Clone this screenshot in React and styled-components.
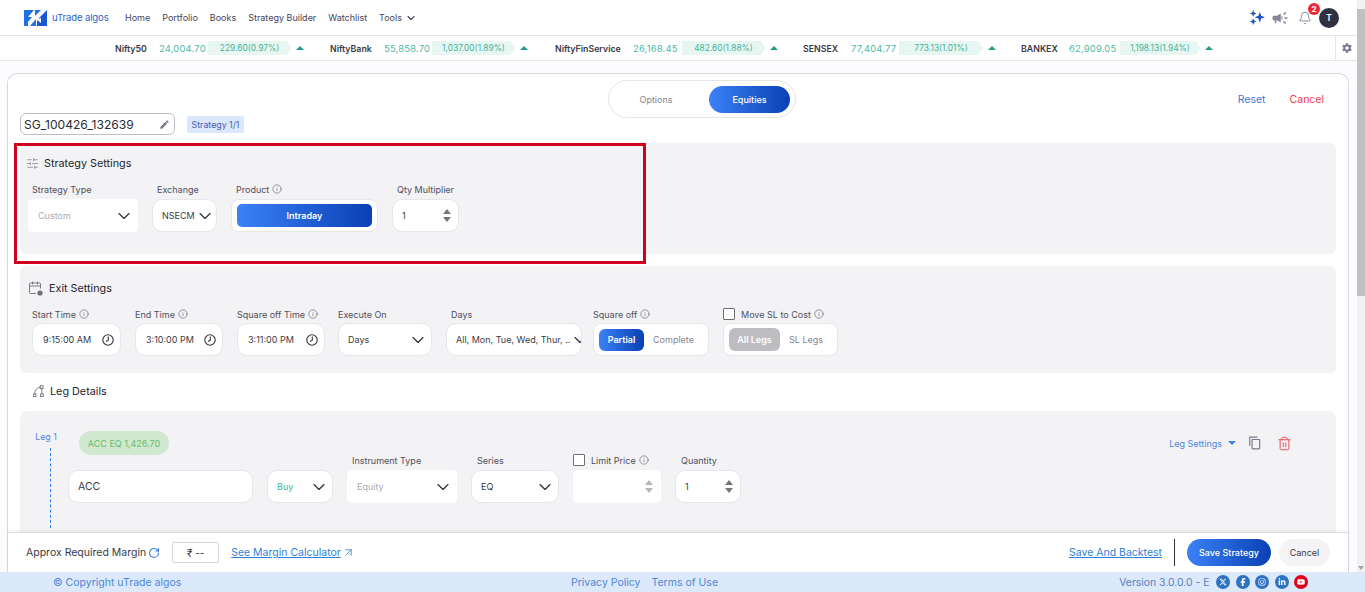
import React from 'react'
import styled, { createGlobalStyle } from 'styled-components'
import {
  Bell,
  ChevronDown,
  Info,
  RotateCw,
  SlidersHorizontal,
  Trash2,
  ArrowUpRight,
} from 'lucide-react'
import { MdCampaign, MdContentCopy, MdEdit, MdSettings } from 'react-icons/md'
import {
  FaFacebookF,
  FaInstagram,
  FaLinkedinIn,
  FaXTwitter,
  FaYoutube,
} from 'react-icons/fa6'

const BLUE_GRADIENT = 'linear-gradient(90deg, #3b82f6, #0a40b5)'

const GlobalStyle = createGlobalStyle`
  html, body {
    margin: 0;
    padding: 0;
    height: 100%;
    overflow: hidden;
    background: #ffffff;
  }
  * {
    box-sizing: border-box;
  }
  body {
    font-family: Inter, "Liberation Sans", sans-serif;
  }
`

const Screen = styled.div`
  width: 1365px;
  height: 592px;
  display: flex;
  flex-direction: column;
  overflow: hidden;
`
const Viewport = styled.div`
  flex: 1;
  min-height: 0;
  display: flex;
`
const PageColumn = styled.div`
  flex: 1;
  min-width: 0;
  display: flex;
  flex-direction: column;
  background: #fcfbfe;
`
const Scrollbar = styled.div`
  width: 8px;
  background: #f1f1f1;
  display: flex;
  flex-direction: column;
  justify-content: space-between;
  align-items: center;
  padding: 2px 0;
`
const ScrollThumb = styled.div`
  width: 8px;
  height: 287px;
  margin-top: 7px;
  background: #c1c1c1;
`
const ScrollArrow = styled.div`
  width: 0;
  height: 0;
  border-left: 3px solid transparent;
  border-right: 3px solid transparent;
  border-top: 4px solid #a3a3a3;
`

/* header */
const Header = styled.header`
  height: 36px;
  flex: none;
  display: flex;
  align-items: center;
  padding: 0 18px 0 24px;
  background: #ffffff;
  border-bottom: 1px solid #e6e6e8;
`
const LogoText = styled.span`
  margin-left: 5px;
  font-size: 9.6px;
  color: #2f63c9;
  letter-spacing: -0.15px;
  width: 55px;
  white-space: nowrap;
`
const Nav = styled.nav`
  display: flex;
  align-items: center;
  gap: 12px;
  margin-left: 18px;
`
const NavLink = styled.a`
  display: flex;
  align-items: center;
  gap: 3px;
  font-size: 9px;
  color: #45455a;
`
const HeaderIcons = styled.div`
  margin-left: auto;
  display: flex;
  align-items: center;
`
const BellBox = styled.div`
  position: relative;
  display: flex;
  margin-left: 9px;
  margin-right: 7px;
  color: #77778f;
`
const Badge = styled.span`
  position: absolute;
  top: -8px;
  right: -8px;
  width: 12px;
  height: 12px;
  border-radius: 50%;
  background: #ee2737;
  color: #ffffff;
  font-size: 8px;
  font-weight: 700;
  display: flex;
  align-items: center;
  justify-content: center;
`
const Avatar = styled.div`
  width: 20px;
  height: 20px;
  border-radius: 50%;
  background: #2f3140;
  color: #ffffff;
  font-size: 9px;
  font-weight: 600;
  display: flex;
  align-items: center;
  justify-content: center;
`

/* ticker */
const Ticker = styled.div`
  height: 25px;
  flex: none;
  display: flex;
  align-items: center;
  padding-left: 115px;
  background: #ffffff;
  border-bottom: 1px solid #e6e6e8;
`
const TickerItem = styled.div`
  display: flex;
  align-items: center;
  margin-right: ${(p) => p.$gap}px;
`
const TickerName = styled.span`
  width: ${(p) => p.$width}px;
  font-size: 8.8px;
  font-weight: 600;
  color: #3a3a44;
  white-space: nowrap;
`
const TickerValue = styled.span`
  font-size: 9.4px;
  letter-spacing: 0.2px;
  color: #4cb9a3;
  white-space: nowrap;
  width: ${(p) => p.$width}px;
`
const TickerPill = styled.span`
  width: ${(p) => p.$width}px;
  height: 14px;
  background: #e8f6f2;
  color: #3fb49c;
  font-size: 8.4px;
  display: flex;
  align-items: center;
  justify-content: center;
  clip-path: polygon(0 0, 95% 0, 100% 50%, 95% 100%, 0 100%);
  white-space: nowrap;
`
const TickerUp = styled.span`
  width: 0;
  height: 0;
  margin-left: 5px;
  border-left: 4px solid transparent;
  border-right: 4px solid transparent;
  border-bottom: 4px solid #1f9e8a;
`
const TickerGear = styled.div`
  margin-left: auto;
  width: 22px;
  height: 100%;
  border-left: 1px solid #e6e6e8;
  display: flex;
  align-items: center;
  justify-content: center;
  color: #77778a;
`

/* card */
const Main = styled.main`
  flex: 1;
  min-height: 0;
  display: flex;
  padding: 12px 8px 0 7px;
`
const Card = styled.section`
  flex: 1;
  min-width: 0;
  display: flex;
  flex-direction: column;
  background: #ffffff;
  border: 1px solid #d9d7dd;
  border-bottom: 0;
  border-radius: 10px 10px 0 0;
`
const CardBody = styled.div`
  flex: 1;
  min-height: 0;
  overflow: hidden;
  padding: 0 12px;
  display: flex;
  flex-direction: column;
`
const CardHead = styled.div`
  height: 69px;
  flex: none;
  display: grid;
  grid-template-columns: 588px 188px 1fr;
`
const NameCell = styled.div`
  display: flex;
  align-items: flex-end;
  padding-bottom: 8px;
`
const NameBox = styled.div`
  width: 155px;
  height: 22px;
  border: 1px solid #bdbdc3;
  border-radius: 6px;
  display: flex;
  align-items: center;
  justify-content: space-between;
  padding: 0 4px 0 3px;
  font-size: 12.1px;
  color: #2c2c34;
`
const StrategyTag = styled.span`
  margin-left: 12px;
  margin-bottom: 2px;
  width: 57px;
  height: 17px;
  background: #dbe7fb;
  color: #3c63b8;
  font-size: 8.8px;
  display: flex;
  align-items: center;
  justify-content: center;
  border-radius: 2px;
  white-space: nowrap;
`
const ModeToggle = styled.div`
  margin-top: 6px;
  height: 38px;
  border: 1px solid #e6e6ea;
  border-radius: 19px;
  display: flex;
  align-items: center;
  padding-left: 1px;
`
const ModeOption = styled.div`
  width: ${(p) => (p.$active ? '81px' : '99px')};
  height: 27px;
  padding-right: ${(p) => (p.$active ? 0 : 7)}px;
  border-radius: 14px;
  background: ${(p) => (p.$active ? BLUE_GRADIENT : 'transparent')};
  color: ${(p) => (p.$active ? '#ffffff' : '#85858f')};
  font-size: 9px;
  font-weight: ${(p) => (p.$active ? 500 : 400)};
  display: flex;
  align-items: center;
  justify-content: center;
`
const HeadActions = styled.div`
  display: flex;
  justify-content: flex-end;
  gap: 24px;
  padding: 19px 12px 0 0;
  font-size: 10.5px;
`
const TextAction = styled.a`
  color: ${(p) => p.$color};
`

/* panels */
const Panel = styled.div`
  position: relative;
  flex: none;
  height: ${(p) => p.$height}px;
  margin-bottom: 12px;
  background: #f3f2f5;
  border-radius: 6px;
  padding: ${(p) => p.$top}px 12px 0;
`
const RedOutline = styled.div`
  position: absolute;
  left: -6px;
  top: 0;
  width: 632px;
  height: 121px;
  border: 3px solid #d0001f;
`
const PanelTitle = styled.h3`
  margin: 0;
  height: 20px;
  display: flex;
  align-items: center;
  gap: ${(p) => p.$gap}px;
  font-size: 10.8px;
  font-weight: 400;
  color: #25252e;
  svg {
    flex: none;
    color: #6f6f7c;
  }
`
const TitleIconShift = styled.span`
  display: flex;
  margin-left: ${(p) => p.$by}px;
`
const FieldRow = styled.div`
  display: flex;
  margin-top: 8px;
  margin-left: ${(p) => p.$shift || 0}px;
`
const Field = styled.div`
  width: ${(p) => p.$width}px;
  margin-right: ${(p) => p.$gap ?? 14}px;
  flex: none;
`
const Label = styled.div`
  height: 16px;
  display: flex;
  align-items: center;
  gap: 3px;
  padding-left: ${(p) => p.$inset || 0}px;
  font-size: 9px;
  color: #50505c;
  white-space: nowrap;
  margin-bottom: ${(p) => p.$below ?? 2}px;
  svg {
    color: #55555f;
  }
`
const Control = styled.div`
  height: ${(p) => p.$height || 33}px;
  background: #ffffff;
  border: 1px solid ${(p) => (p.$plain ? '#ffffff' : '#e7e6ea')};
  border-radius: ${(p) => (p.$plain ? 4 : 10)}px;
  display: flex;
  align-items: center;
  justify-content: space-between;
  padding: 0 6px 0 ${(p) => p.$left || 9}px;
  font-size: 9px;
  color: ${(p) => p.$color || '#3a3a44'};
  white-space: nowrap;
  overflow: hidden;
`
const ControlText = styled.span`
  font-size: ${(p) => p.$size}px;
`
const Chevron = styled(ChevronDown)`
  flex: none;
  margin-right: -3px;
  color: #2f2f38;
  stroke-width: 1.4;
`
const Spinner = styled.div`
  display: flex;
  flex-direction: column;
  gap: 3px;
  margin-right: 1px;
`
const SpinUp = styled.span`
  width: 0;
  height: 0;
  border-left: 4.5px solid transparent;
  border-right: 4.5px solid transparent;
  border-bottom: 5px solid ${(p) => (p.$muted ? '#b5b5ba' : '#75757d')};
`
const SpinDown = styled(SpinUp)`
  border-bottom: 0;
  border-top: 5px solid ${(p) => (p.$muted ? '#b5b5ba' : '#75757d')};
`
const Segmented = styled.div`
  height: 33px;
  background: #ffffff;
  border: 1px solid #e7e6ea;
  border-radius: 8px;
  display: flex;
  align-items: center;
  padding: 0 5px;
`
const SegmentButton = styled.div`
  flex: ${(p) => (p.$grow ? 1 : 'none')};
  width: ${(p) => p.$width || 'auto'};
  height: ${(p) => p.$height || 22}px;
  border-radius: ${(p) => p.$radius || 6}px;
  background: ${(p) => p.$fill || 'transparent'};
  color: ${(p) => p.$text || '#85858f'};
  font-size: 9px;
  font-weight: ${(p) => (p.$fill ? 600 : 400)};
  display: flex;
  align-items: center;
  justify-content: center;
`
const CheckBox = styled.span`
  width: 12px;
  height: 12px;
  flex: none;
  margin-right: 3px;
  background: #ffffff;
  border: 1px solid #6f6f76;
  border-radius: 1px;
`
const LegHeading = styled.div`
  flex: none;
  height: 20px;
  margin: -4px 0 10px;
  padding-left: 13px;
`
const LegPanel = styled.div`
  flex: none;
  height: 170px;
  background: #f3f2f5;
  border-radius: 8px 8px 0 0;
  display: grid;
  grid-template-columns: 48px 1fr;
`
const LegRail = styled.div`
  display: flex;
  flex-direction: column;
  align-items: center;
  padding: 20px 0 0 12px;
  width: 48px;
`
const LegName = styled.div`
  font-size: 8.8px;
  color: #4f86e0;
  white-space: nowrap;
  margin-bottom: 6px;
  margin-left: -8px;
`
const LegLine = styled.div`
  width: 0;
  height: 80px;
  border-left: 1px dashed #2f7df6;
`
const LegContent = styled.div`
  padding: 20px 44px 0 0;
  display: flex;
  flex-direction: column;
`
const LegTop = styled.div`
  display: flex;
  align-items: center;
  justify-content: space-between;
  margin-left: 11px;
  height: 24px;
`
const PriceChip = styled.span`
  width: 90px;
  height: 24px;
  border-radius: 12px;
  background: #cfe8cf;
  color: #68bb6c;
  font-size: 9px;
  display: flex;
  align-items: center;
  justify-content: center;
  white-space: nowrap;
`
const LegTools = styled.div`
  display: flex;
  align-items: center;
  color: #4d86e6;
  font-size: 9px;
  svg:last-child {
    margin-left: 15px;
  }
`
const Caret = styled.span`
  width: 0;
  height: 0;
  margin: 0 12px 0 6px;
  border-left: 4px solid transparent;
  border-right: 4px solid transparent;
  border-top: 4px solid #3b82f6;
`
const LegRow = styled.div`
  display: flex;
  margin-top: -3px;
`

/* action bar */
const ActionBar = styled.div`
  flex: none;
  height: 40px;
  display: flex;
  align-items: center;
  padding: 0 18px;
  background: #ffffff;
  border-top: 1px solid #dcdadf;
  box-shadow: 0 -2px 3px rgba(0, 0, 0, 0.05);
  font-size: 10.5px;
  color: #3a3a44;
`
const MarginLabel = styled.span`
  display: flex;
  align-items: center;
  gap: 2px;
  white-space: nowrap;
  svg {
    color: #2f7fd6;
  }
`
const MarginBox = styled.span`
  width: 47px;
  height: 21px;
  margin: 0 12px;
  border: 1px solid #d6d6da;
  border-radius: 2px;
  display: flex;
  align-items: center;
  justify-content: center;
  font-size: 10px;
  color: #3a3a44;
`
const BarLink = styled.a`
  color: #2f7fd6;
  text-decoration: underline;
  white-space: nowrap;
`
const CalculatorArrow = styled(ArrowUpRight)`
  margin-left: 1px;
  color: #2f7fd6;
`
const BarRight = styled.div`
  margin-left: auto;
  display: flex;
  align-items: center;
`
const BarDivider = styled.span`
  width: 1px;
  height: 27px;
  margin: 0 12px;
  background: #2f2f38;
`
const PrimaryButton = styled.button`
  width: 84px;
  height: 27px;
  border: 0;
  border-radius: 14px;
  background: ${BLUE_GRADIENT};
  color: #ffffff;
  font-family: inherit;
  font-size: 9px;
  font-weight: 500;
`
const GhostButton = styled.button`
  width: 51px;
  height: 27px;
  margin-left: 8px;
  border: 0;
  border-radius: 14px;
  background: #f5f3f5;
  color: #3a3a44;
  font-family: inherit;
  font-size: 9px;
`

/* footer */
const Footer = styled.footer`
  flex: none;
  height: 20px;
  background: #dbe9fb;
  display: grid;
  grid-template-columns: 571px 300px 1fr;
  align-items: center;
  font-size: 10.5px;
  color: #4f86d8;
`
const Copyright = styled.span`
  padding-left: 53px;
  white-space: nowrap;
`
const FooterLinks = styled.div`
  display: flex;
  gap: 11px;
`
const FooterRight = styled.div`
  display: flex;
  justify-content: flex-end;
  align-items: center;
  padding-right: 57px;
  gap: 5.5px;
  color: #5a7fc0;
`
const Version = styled.span`
  margin-right: 1px;
  font-size: 10.4px;
`
const Social = styled.span`
  width: 14px;
  height: 14px;
  border-radius: 50%;
  background: ${(p) => p.$color || '#2f72c4'};
  color: #ffffff;
  display: flex;
  align-items: center;
  justify-content: center;
`

const LogoMark = () => (
  <svg width="23" height="16" viewBox="0 0 23 16">
    <path d="M0 0h10L4 7h4l-4 5v4H0z" fill="#1f6fe5" />
    <path d="M6 16h6V9z" fill="#1f6fe5" />
    <path d="M11 0h6l-6 6z" fill="#1f6fe5" />
    <path d="M23 0v16H13v-6l4 3V8l-3 1z" fill="#1a58d0" />
  </svg>
)

const SparkIcon = () => (
  <svg width="15" height="15" viewBox="0 0 15 15" fill="#1a55c8">
    <path d="M9.8 2 11.2 5.8 15 7.2 11.2 8.6 9.8 12.4 8.4 8.6 4.6 7.2 8.4 5.8z" />
    <path d="M3.2 0 4.2 2.4 6.5 3.4 4.2 4.4 3.2 6.8 2.2 4.4 0 3.4 2.2 2.4z" />
    <path d="M3.2 8.4 4.2 10.6 6.5 11.6 4.2 12.6 3.2 15 2.2 12.6 0 11.6 2.2 10.6z" />
  </svg>
)

const ClockIcon = () => (
  <svg width="12" height="12" viewBox="0 0 12 12" fill="none" stroke="#33333b">
    <circle cx="6" cy="6" r="5.2" strokeWidth="1.1" />
    <path d="M6.3 2.6V6.3L4 7.6" strokeWidth="1.1" />
  </svg>
)

const CalendarDotIcon = () => (
  <svg width="14" height="15" viewBox="0 0 14 15" fill="none" stroke="#6f6f7c" strokeWidth="0.9">
    <path d="M7 12.5H1.5a1 1 0 0 1-1-1V3a1 1 0 0 1 1-1h9a1 1 0 0 1 1 1v4.5" />
    <path d="M.5 5h11M3.5.5v3M8.5.5v3" />
    <circle cx="11" cy="12" r="2.6" fill="#6f6f7c" stroke="none" />
  </svg>
)

const LegRouteIcon = () => (
  <svg width="11" height="12" viewBox="0 0 11 12" fill="none" stroke="#6f6f7c" strokeWidth="0.9">
    <path d="M1.5 9C2 5 4 2.5 7.5 2.2M8.8 3.2V9" />
    <rect x="7.2" y=".8" width="2.8" height="2.8" />
    <rect x=".3" y="9" width="2.6" height="2.6" />
    <rect x="7.6" y="9" width="2.6" height="2.6" />
  </svg>
)

const tickers = [
  { name: 'Nifty50', value: '24,004.70', change: '229.60(0.97%)', nameWidth: 44, valueWidth: 49, pill: 83, gap: 26 },
  { name: 'NiftyBank', value: '55,858.70', change: '1,037.00(1.89%)', nameWidth: 54, valueWidth: 48, pill: 83, gap: 27 },
  { name: 'NiftyFinService', value: '26,168.45', change: '482.60(1.88%)', nameWidth: 78, valueWidth: 49, pill: 83, gap: 25 },
  { name: 'SENSEX', value: '77,404.77', change: '773.13(1.01%)', nameWidth: 48, valueWidth: 48, pill: 84, gap: 25 },
  { name: 'BANKEX', value: '62,909.05', change: '1,198.13(1.94%)', nameWidth: 48, valueWidth: 51, pill: 80, gap: 0 },
]

const InfoDot = () => <Info size={10} strokeWidth={1.4} />

const NumberBox = ({ value, muted }) => (
  <Control>
    <span>{value}</span>
    <Spinner>
      <SpinUp $muted={muted} />
      <SpinDown $muted={muted} />
    </Spinner>
  </Control>
)

const SelectBox = ({ value, plain, color }) => (
  <Control $plain={plain} $color={color}>
    <span>{value}</span>
    <Chevron size={20} />
  </Control>
)

const TimeField = ({ label, value, width, gap }) => (
  <Field $width={width} $gap={gap}>
    <Label $below={1}>
      {label} <InfoDot />
    </Label>
    <Control $left={10}>
      <span>{value}</span>
      <ClockIcon />
    </Control>
  </Field>
)

function App() {
  return (
    <Screen>
      <GlobalStyle />
      <Viewport>
        <PageColumn>
          <Header>
            <LogoMark />
            <LogoText>uTrade algos</LogoText>
            <Nav>
              <NavLink>Home</NavLink>
              <NavLink>Portfolio</NavLink>
              <NavLink>Books</NavLink>
              <NavLink>Strategy Builder</NavLink>
              <NavLink>Watchlist</NavLink>
              <NavLink>
                Tools <ChevronDown size={12} strokeWidth={2.2} />
              </NavLink>
            </Nav>
            <HeaderIcons>
              <SparkIcon />
              <MdCampaign size={18} color="#85859a" style={{ marginLeft: 6 }} />
              <BellBox>
                <Bell size={14} strokeWidth={1.4} />
                <Badge>2</Badge>
              </BellBox>
              <Avatar>T</Avatar>
            </HeaderIcons>
          </Header>
          <Ticker>
            {tickers.map((item) => (
              <TickerItem key={item.name} $gap={item.gap}>
                <TickerName $width={item.nameWidth}>{item.name}</TickerName>
                <TickerValue $width={item.valueWidth}>{item.value}</TickerValue>
                <TickerPill $width={item.pill}>{item.change}</TickerPill>
                <TickerUp />
              </TickerItem>
            ))}
            <TickerGear>
              <MdSettings size={12} />
            </TickerGear>
          </Ticker>
          <Main>
            <Card>
              <CardBody>
                <CardHead>
                  <NameCell>
                    <NameBox>
                      SG_100426_132639
                      <MdEdit size={11} color="#77777f" />
                    </NameBox>
                    <StrategyTag>Strategy 1/1</StrategyTag>
                  </NameCell>
                  <ModeToggle>
                    <ModeOption>Options</ModeOption>
                    <ModeOption $active>Equities</ModeOption>
                  </ModeToggle>
                  <HeadActions>
                    <TextAction $color="#3f78d6">Reset</TextAction>
                    <TextAction $color="#ee3b4b">Cancel</TextAction>
                  </HeadActions>
                </CardHead>

                <Panel $height={111} $top={10}>
                  <RedOutline />
                  <PanelTitle $gap={5}>
                    <TitleIconShift $by={-6}>
                      <SlidersHorizontal size={13} strokeWidth={1.2} />
                    </TitleIconShift>
                    Strategy Settings
                  </PanelTitle>
                  <FieldRow $shift={-4}>
                    <Field $width={110}>
                      <Label $inset={4}>Strategy Type</Label>
                      <SelectBox value="Custom" plain color="#aaaab0" />
                    </Field>
                    <Field $width={65}>
                      <Label $inset={5}>Exchange</Label>
                      <SelectBox value="NSECM" />
                    </Field>
                    <Field $width={147}>
                      <Label $inset={5}>
                        Product <InfoDot />
                      </Label>
                      <Segmented>
                        <SegmentButton $grow $height={23} $radius={5} $fill={BLUE_GRADIENT} $text="#ffffff">
                          Intraday
                        </SegmentButton>
                      </Segmented>
                    </Field>
                    <Field $width={67}>
                      <Label $inset={5}>Qty Multiplier</Label>
                      <NumberBox value="1" />
                    </Field>
                  </FieldRow>
                </Panel>

                <Panel $height={107} $top={12}>
                  <PanelTitle $gap={6}>
                    <TitleIconShift $by={-3}>
                      <CalendarDotIcon />
                    </TitleIconShift>
                    Exit Settings
                  </PanelTitle>
                  <FieldRow>
                    <TimeField label="Start Time" value="9:15:00 AM" width={89} />
                    <TimeField label="End Time" value="3:10:00 PM" width={88} />
                    <TimeField label="Square off Time" value="3:11:00 PM" width={88} gap={13} />
                    <Field $width={94}>
                      <Label $below={1}>Execute On</Label>
                      <SelectBox value="Days" />
                    </Field>
                    <Field $width={136} $gap={11}>
                      <Label $inset={5} $below={1}>Days</Label>
                      <SelectBox value="All, Mon, Tue, Wed, Thur, .." />
                    </Field>
                    <Field $width={116}>
                      <Label $below={1}>
                        Square off <InfoDot />
                      </Label>
                      <Segmented>
                        <SegmentButton $width="45px" $fill={BLUE_GRADIENT} $text="#ffffff">
                          Partial
                        </SegmentButton>
                        <SegmentButton $grow>Complete</SegmentButton>
                      </Segmented>
                    </Field>
                    <Field $width={115}>
                      <Label $below={1}>
                        <CheckBox />
                        Move SL to Cost <InfoDot />
                      </Label>
                      <Segmented>
                        <SegmentButton $width="51px" $height={23} $fill="#bdbcc0" $text="#ffffff">
                          All Legs
                        </SegmentButton>
                        <SegmentButton $grow>SL Legs</SegmentButton>
                      </Segmented>
                    </Field>
                  </FieldRow>
                </Panel>

                <LegHeading>
                  <PanelTitle $gap={6}>
                    <LegRouteIcon />
                    Leg Details
                  </PanelTitle>
                </LegHeading>

                <LegPanel>
                  <LegRail>
                    <LegName>Leg 1</LegName>
                    <LegLine />
                  </LegRail>
                  <LegContent>
                    <LegTop>
                      <PriceChip>ACC EQ 1,426.70</PriceChip>
                      <LegTools>
                        Leg Settings
                        <Caret />
                        <MdContentCopy size={14} color="#7a7a8c" />
                        <Trash2 size={15} strokeWidth={1.5} color="#ee4450" />
                      </LegTools>
                    </LegTop>
                    <LegRow>
                      <Field $width={185} $gap={14}>
                        <Label />
                        <Control $left={9}>
                          <ControlText $size={10.5}>ACC</ControlText>
                        </Control>
                      </Field>
                      <Field $width={66}>
                        <Label />
                        <SelectBox value="Buy" color="#45b8a0" />
                      </Field>
                      <Field $width={110}>
                        <Label $inset={5}>Instrument Type</Label>
                        <SelectBox value="Equity" plain color="#aaaab0" />
                      </Field>
                      <Field $width={88} $gap={14}>
                        <Label $inset={6}>Series</Label>
                        <SelectBox value="EQ" />
                      </Field>
                      <Field $width={88} $gap={14}>
                        <Label>
                          <CheckBox />
                          Limit Price <InfoDot />
                        </Label>
                        <Control $plain>
                          <span />
                          <Spinner>
                            <SpinUp $muted />
                            <SpinDown $muted />
                          </Spinner>
                        </Control>
                      </Field>
                      <Field $width={66}>
                        <Label $inset={6}>Quantity</Label>
                        <NumberBox value="1" />
                      </Field>
                    </LegRow>
                  </LegContent>
                </LegPanel>
              </CardBody>
              <ActionBar>
                <MarginLabel>
                  Approx Required Margin
                  <RotateCw size={12} strokeWidth={2.2} />
                </MarginLabel>
                <MarginBox>₹ --</MarginBox>
                <BarLink>See Margin Calculator</BarLink>
                <CalculatorArrow size={13} strokeWidth={1.5} />
                <BarRight>
                  <BarLink>Save And Backtest</BarLink>
                  <BarDivider />
                  <PrimaryButton>Save Strategy</PrimaryButton>
                  <GhostButton>Cancel</GhostButton>
                </BarRight>
              </ActionBar>
            </Card>
          </Main>
        </PageColumn>
        <Scrollbar>
          <ScrollThumb />
          <ScrollArrow />
        </Scrollbar>
      </Viewport>
      <Footer>
        <Copyright>© Copyright uTrade algos</Copyright>
        <FooterLinks>
          <span>Privacy Policy</span>
          <span>Terms of Use</span>
        </FooterLinks>
        <FooterRight>
          <Version>Version 3.0.0.0 - E</Version>
          <Social><FaXTwitter size={8} /></Social>
          <Social><FaFacebookF size={8} /></Social>
          <Social><FaInstagram size={8} /></Social>
          <Social><FaLinkedinIn size={8} /></Social>
          <Social $color="#e3001b"><FaYoutube size={8} /></Social>
        </FooterRight>
      </Footer>
    </Screen>
  )
}

export default App
